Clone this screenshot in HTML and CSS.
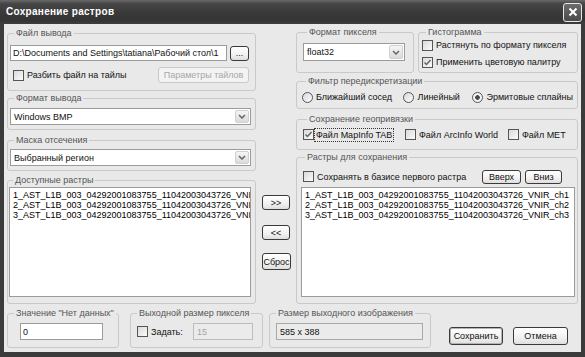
FILE: index.html
```html
<!DOCTYPE html>
<html>

<head>
    <meta charset="UTF-8">
    <title>Сохранение растров</title>
    <link rel="stylesheet" href="styles.css">
</head>

<body>
    <div class="window">
        <div class="titlebar">
            <span class="title">Сохранение растров</span>
            <span class="close-btn">
                <svg width="10" height="10" viewBox="0 0 10 10"><path d="M1.5 1.5l7 7M8.5 1.5l-7 7" stroke="#fff" stroke-width="2" fill="none"/></svg>
            </span>
        </div>

        <div class="client">
            <div class="main">
                <!-- left column -->
                <div class="col-left">
                    <fieldset class="group g-file">
                        <legend>Файл вывода</legend>
                        <div class="row">
                            <div class="edit path-edit">D:\Documents and Settings\tatiana\Рабочий стол\1</div>
                            <button class="btn browse-btn">...</button>
                        </div>
                        <div class="row tiles-row">
                            <label class="check"><span class="cb"></span>Разбить файл на тайлы</label>
                            <button class="btn disabled tiles-btn">Параметры тайлов</button>
                        </div>
                    </fieldset>

                    <fieldset class="group g-format">
                        <legend>Формат вывода</legend>
                        <div class="combo">
                            <span class="combo-text">Windows BMP</span>
                            <span class="combo-btn"><svg width="8" height="5" viewBox="0 0 8 5"><path d="M1 1l3 3 3-3" fill="none" stroke="#666" stroke-width="1.5"/></svg></span>
                        </div>
                    </fieldset>

                    <fieldset class="group g-mask">
                        <legend>Маска отсечения</legend>
                        <div class="combo">
                            <span class="combo-text">Выбранный регион</span>
                            <span class="combo-btn"><svg width="8" height="5" viewBox="0 0 8 5"><path d="M1 1l3 3 3-3" fill="none" stroke="#666" stroke-width="1.5"/></svg></span>
                        </div>
                    </fieldset>

                    <fieldset class="group g-avail">
                        <legend>Доступные растры</legend>
                        <div class="listbox">
                            <div>1_AST_L1B_003_04292001083755_11042003043726_VNIR_ch1</div>
                            <div>2_AST_L1B_003_04292001083755_11042003043726_VNIR_ch2</div>
                            <div>3_AST_L1B_003_04292001083755_11042003043726_VNIR_ch3</div>
                        </div>
                    </fieldset>
                </div>

                <!-- move buttons -->
                <div class="col-mid">
                    <button class="btn move-btn">&gt;&gt;</button>
                    <button class="btn move-btn back-btn">&lt;&lt;</button>
                    <button class="btn reset-btn">Сброс</button>
                </div>

                <!-- right column -->
                <div class="col-right">
                    <div class="top-row">
                        <fieldset class="group g-pixfmt">
                            <legend>Формат пикселя</legend>
                            <div class="combo combo-pix">
                                <span class="combo-text">float32</span>
                                <span class="combo-btn"><svg width="8" height="5" viewBox="0 0 8 5"><path d="M1 1l3 3 3-3" fill="none" stroke="#666" stroke-width="1.5"/></svg></span>
                            </div>
                        </fieldset>
                        <fieldset class="group g-hist">
                            <legend>Гистограмма</legend>
                            <label class="check hist-row"><span class="cb"></span>Растянуть по формату пикселя</label>
                            <label class="check hist-row second"><span class="cb checked"><svg width="9" height="9" viewBox="0 0 9 9"><path d="M1.5 4.5l2 2 4-4.5" fill="none" stroke="#666" stroke-width="1.5"/></svg></span>Применить цветовую палитру</label>
                        </fieldset>
                    </div>

                    <fieldset class="group g-filter">
                        <legend>Фильтр передискретизации</legend>
                        <div class="row">
                            <label class="radio opt-1"><span class="rb"></span>Ближайший сосед</label>
                            <label class="radio opt-2"><span class="rb"></span>Линейный</label>
                            <label class="radio"><span class="rb on"></span>Эрмитовые сплайны</label>
                        </div>
                    </fieldset>

                    <fieldset class="group g-geo">
                        <legend>Сохранение геопривязки</legend>
                        <div class="row">
                            <label class="check geo-1"><span class="cb checked"><svg width="9" height="9" viewBox="0 0 9 9"><path d="M1.5 4.5l2 2 4-4.5" fill="none" stroke="#666" stroke-width="1.5"/></svg></span><span class="focus">Файл MapInfo TAB</span></label>
                            <label class="check geo-2"><span class="cb"></span>Файл ArcInfo World</label>
                            <label class="check"><span class="cb"></span>Файл MET</label>
                        </div>
                    </fieldset>

                    <fieldset class="group g-save">
                        <legend>Растры для сохранения</legend>
                        <div class="row save-row">
                            <label class="check"><span class="cb"></span>Сохранять в базисе первого растра</label>
                            <button class="btn up-btn">Вверх</button>
                            <button class="btn down-btn">Вниз</button>
                        </div>
                        <div class="listbox">
                            <div>1_AST_L1B_003_04292001083755_11042003043726_VNIR_ch1</div>
                            <div>2_AST_L1B_003_04292001083755_11042003043726_VNIR_ch2</div>
                            <div>3_AST_L1B_003_04292001083755_11042003043726_VNIR_ch3</div>
                        </div>
                    </fieldset>
                </div>
            </div>

            <div class="bottom">
                <fieldset class="group g-nodata">
                    <legend>Значение "Нет данных"</legend>
                    <div class="edit nodata-edit">0</div>
                </fieldset>

                <fieldset class="group g-pixsize">
                    <legend>Выходной размер пикселя</legend>
                    <div class="row">
                        <label class="check"><span class="cb"></span>Задать:</label>
                        <div class="edit disabled size-edit">15</div>
                    </div>
                </fieldset>

                <fieldset class="group g-outsize">
                    <legend>Размер выходного изображения</legend>
                    <div class="edit readonly out-edit">585 x 388</div>
                </fieldset>

                <div class="actions">
                    <button class="btn default save-btn">Сохранить</button>
                    <button class="btn cancel-btn">Отмена</button>
                </div>
            </div>
        </div>
    </div>
</body>

</html>
```

FILE: styles.css
```css
* {
    box-sizing: border-box;
}

body {
    margin: 0;
    padding: 0;
    background-color: #3a3a3a;
    font-family: "Liberation Sans", Arial, sans-serif;
    font-size: 9px;
    line-height: 10px;
    color: #111;
}

.window {
    width: 585px;
    height: 357px;
    background-color: #3b3b3b;
    padding: 0 4px 5px 4px;
    display: flex;
    flex-direction: column;
}

.titlebar {
    height: 24px;
    margin: 0 -4px;
    padding: 0 3px 0 6px;
    display: flex;
    align-items: center;
    justify-content: space-between;
    background: linear-gradient(#6a6a6a, #464646 15%, #3a3a3a 50%, #343434 85%, #3e3e3e);
}

.title {
    color: #fff;
    font-size: 10px;
    font-weight: bold;
    letter-spacing: 0.3px;
}

.close-btn {
    width: 19px;
    height: 19px;
    border: 1px solid #e8e8e8;
    border-radius: 3px;
    background: linear-gradient(#6c6c6c, #4a4a4a);
    display: flex;
    align-items: center;
    justify-content: center;
}

.client {
    flex: 1;
    background-color: #e9e9e9;
    padding: 3px 3px 4px 3px;
    display: flex;
    flex-direction: column;
}

.main {
    display: flex;
}

/* group boxes */
.group {
    margin: 0;
    padding: 0;
    min-width: 0;
    border: 1px solid #c9c9c9;
    border-radius: 3px;
}

.group legend {
    margin-left: 4px;
    padding: 0 2px;
    color: #555;
    line-height: 10px;
    white-space: nowrap;
}

.row {
    display: flex;
    align-items: center;
}

/* left column */
.col-left {
    width: 249px;
    margin-top: 1px;
    display: flex;
    flex-direction: column;
}

.g-file {
    padding: 7px 6px 7px 2px;
}

.g-file .row {
    height: 16px;
}

.tiles-row {
    margin-top: 6px;
}

.tiles-row .check {
    margin-left: 3px;
}

.g-format {
    margin-top: 2px;
    padding: 5px 4px 4px 2px;
}

.g-mask {
    margin-top: 5px;
    padding: 4px 4px 4px 2px;
}

.g-avail {
    margin-top: 4px;
    padding: 2px 4px 6px 1px;
}

/* middle column */
.col-mid {
    width: 40px;
    padding: 168px 0 0 6px;
    display: flex;
    flex-direction: column;
    align-items: flex-start;
}

.move-btn {
    width: 28px;
    height: 15px;
}

.back-btn {
    margin-top: 15px;
}

.reset-btn {
    margin-top: 13px;
    width: 29px;
    height: 17px;
}

/* right column */
.col-right {
    width: 282px;
    display: flex;
    flex-direction: column;
}

.top-row {
    display: flex;
    gap: 4px;
}

.g-pixfmt {
    width: 118px;
    padding: 6px 7px 11px 6px;
}

.g-hist {
    width: 160px;
    padding: 1px 2px 3px 3px;
}

.hist-row {
    height: 14px;
}

.hist-row.second {
    margin-top: 3px;
}

.g-filter {
    margin-top: 3px;
    padding: 5px 4px 5px 5px;
}

.g-filter .row {
    height: 12px;
}

.opt-1 {
    width: 103px;
}

.opt-2 {
    width: 70px;
}

.g-geo {
    margin-top: 5px;
    padding: 4px 4px 8px 6px;
}

.g-geo .row {
    height: 13px;
}

.geo-1 {
    width: 102px;
}

.geo-2 {
    width: 103px;
}

.focus {
    outline: 1px dotted #333;
    padding: 1px 1px;
    margin-left: -2px;
}

.g-save {
    margin-top: 2px;
    padding: 7px 2px 6px 4px;
}

.save-row {
    height: 15px;
    margin-bottom: 3px;
}

.save-row .check {
    margin-left: 2px;
}

.up-btn {
    margin-left: auto;
    width: 39px;
    height: 14px;
}

.down-btn {
    margin-left: 4px;
    margin-right: 13px;
    width: 37px;
    height: 14px;
}

/* bottom row */
.bottom {
    display: flex;
    margin-top: 4px;
}

.g-nodata {
    width: 112px;
    padding: 5px 2px 7px 2px;
}

.nodata-edit {
    margin-left: 10px;
    width: 83px;
    height: 17px;
}

.g-pixsize {
    width: 133px;
    margin-left: 11px;
    padding: 5px 2px 7px 2px;
}

.g-pixsize .row {
    height: 17px;
    padding: 0 7px 0 4px;
}

.size-edit {
    margin-left: auto;
    width: 60px;
    height: 17px;
}

.g-outsize {
    width: 162px;
    margin-left: 6px;
    padding: 5px 2px 7px 2px;
}

.out-edit {
    margin-left: 4px;
    width: 147px;
    height: 17px;
}

.actions {
    display: flex;
    align-items: flex-end;
    padding-bottom: 3px;
}

.save-btn {
    margin-left: 18px;
    width: 54px;
    height: 18px;
}

.cancel-btn {
    margin-left: 10px;
    width: 55px;
    height: 18px;
}

/* controls */
.edit {
    background-color: #fff;
    border: 1px solid #9b9b9b;
    padding-left: 2px;
    display: flex;
    align-items: center;
    white-space: nowrap;
    overflow: hidden;
}

.path-edit {
    width: 217px;
    height: 16px;
}

.edit.disabled {
    background-color: #ebebeb;
    border-color: #bdbdbd;
    color: #a5a5a5;
    padding-left: 3px;
}

.edit.readonly {
    background-color: #ebebeb;
    border-color: #a8a8a8;
    padding-left: 3px;
}

.combo {
    height: 17px;
    background-color: #fff;
    border: 1px solid #9b9b9b;
    display: flex;
}

.combo-pix {
    width: 102px;
    height: 18px;
}

.combo-text {
    flex: 1;
    padding-left: 3px;
    display: flex;
    align-items: center;
}

.combo-btn {
    width: 14px;
    margin: 1px;
    border-radius: 2px;
    background: linear-gradient(#f6f6f6, #dadada);
    border: 1px solid #d0d0d0;
    display: flex;
    align-items: center;
    justify-content: center;
}

.listbox {
    height: 110px;
    background-color: #fff;
    border: 1px solid #9b9b9b;
    padding: 2px 0 0 3px;
    white-space: nowrap;
    overflow: hidden;
    color: #000;
}

.btn {
    font-family: inherit;
    font-size: 9px;
    line-height: 10px;
    color: #111;
    padding: 0;
    border: 1px solid #3a3a3a;
    border-radius: 3px;
    background: linear-gradient(#ffffff, #f1f1f1 60%, #dedede);
    white-space: nowrap;
}

.btn.default {
    box-shadow: inset 0 0 0 1px #b4b4b4;
}

.btn.disabled {
    border-color: #c8c8c8;
    color: #a8a8a8;
    background: #f3f3f3;
}

.browse-btn {
    margin-left: 3px;
    width: 19px;
    height: 15px;
}

.tiles-btn {
    margin-left: auto;
    width: 91px;
    height: 16px;
}

.check,
.radio {
    display: flex;
    align-items: center;
    white-space: nowrap;
}

.cb {
    width: 11px;
    height: 11px;
    margin-right: 3px;
    border: 1px solid #555;
    background: linear-gradient(135deg, #d9d9d9, #fbfbfb);
    display: flex;
    align-items: center;
    justify-content: center;
    flex: none;
}

.rb {
    width: 11px;
    height: 11px;
    margin-right: 3px;
    border: 1px solid #555;
    border-radius: 50%;
    background: linear-gradient(135deg, #d9d9d9, #fbfbfb);
    flex: none;
}

.rb.on {
    background: radial-gradient(circle, #4a4a4a 0, #4a4a4a 2px, #f4f4f4 2.6px, #f4f4f4 100%);
}
```
